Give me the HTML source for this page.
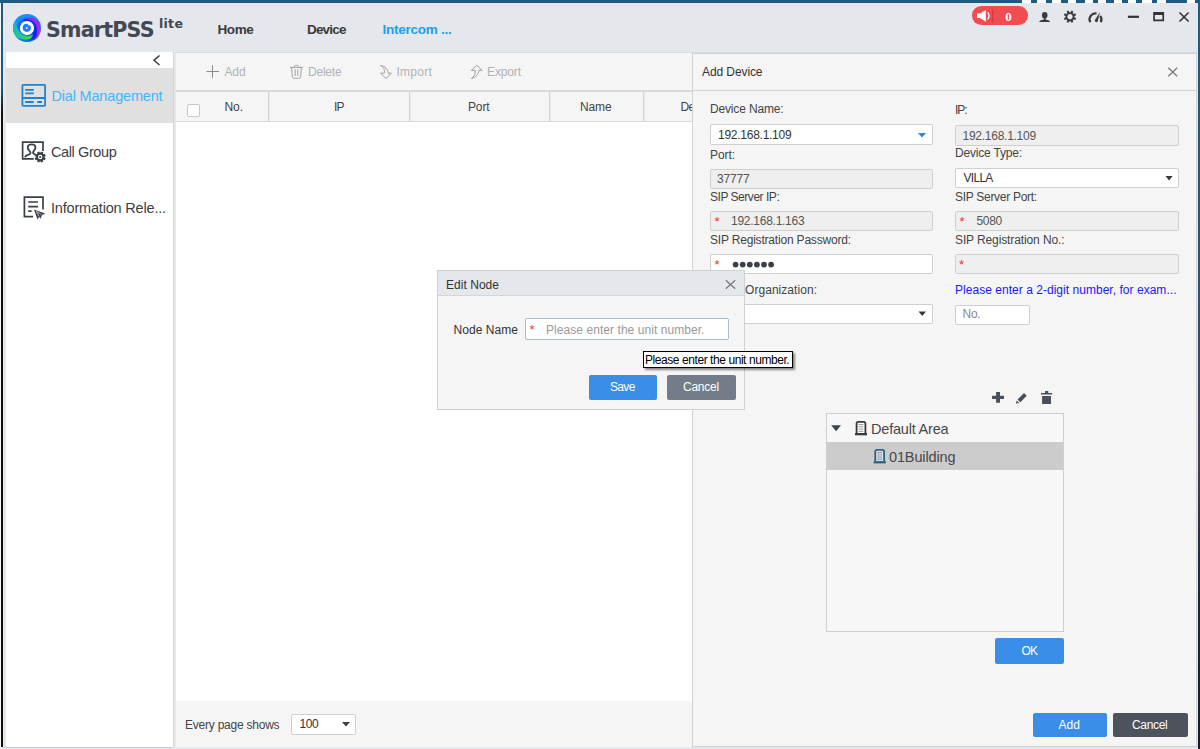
<!DOCTYPE html>
<html><head><meta charset="utf-8"><title>SmartPSS lite</title>
<style>
html,body{margin:0;padding:0;}
body{width:1200px;height:749px;position:relative;overflow:hidden;background:#e4e7ec;font-family:"Liberation Sans",sans-serif;}
.t{position:absolute;z-index:2;white-space:pre;line-height:normal;}
.a{position:absolute;box-sizing:border-box;}
svg{position:absolute;overflow:visible;}
.in{position:absolute;box-sizing:border-box;border:1px solid #cfcfcf;border-radius:2px;background:#fff;z-index:4;}
.dis{background:#efefef;}
.btn{position:absolute;border-radius:2px;z-index:4;}

</style></head>
<body>
<!-- desktop edges -->
<div class="a" style="left:0;top:0;width:1200px;height:3px;background:#1f5b80;"></div>
<div class="a" style="left:1022px;top:0;width:176px;height:3px;background:linear-gradient(90deg,#fff 0 9px,#1f5b80 9px 15px,#fff 15px 24px,#1f5b80 24px 30px,#fff 30px 39px,#1f5b80 39px 46px,#fff 46px 54px,#1f5b80 54px 63px,#fff 63px 71px,#1f5b80 71px 76px,#fff 76px 84px,#1f5b80 84px 92px,#fff 92px 100px,#1f5b80 100px 106px,#fff 106px 114px,#1f5b80 114px 120px,#fff 120px 130px,#1f5b80 130px 135px,#fff 135px 144px,#1f5b80 144px 165px,#fff 165px 173px,#1f5b80 173px 176px);"></div>
<div class="a" style="left:0;top:3px;width:2px;height:746px;background:#f6f6f6;"></div>
<div class="a" style="left:1.4px;top:3px;width:1.4px;height:744px;background:linear-gradient(180deg,#1f5b80 0,#1f5b80 85px,#111 110px,#111 100%);"></div>
<div class="a" style="left:1198px;top:0;width:2px;height:749px;background:linear-gradient(180deg,#1f5b80 0,#2a5578 30%,#3d4670 50%,#4a3a55 62%,#1d2a40 75%,#151c2c 100%);"></div>
<!-- header -->
<div class="a" style="left:3.5px;top:3px;width:1194.5px;height:49px;background:#e4e7ec;"></div>
<div class="a" style="left:3.5px;top:52px;width:1194.5px;height:1px;background:#d9dbe0;"></div>
<!-- sidebar -->
<div class="a" style="left:6px;top:52px;width:167px;height:695px;background:#fff;"></div>
<div class="a" style="left:6px;top:67.5px;width:167px;height:55.5px;background:#e0e0e0;"></div>
<div class="a" style="left:173px;top:52px;width:1px;height:695px;background:#d4d6da;"></div>
<div class="a" style="left:3px;top:746.5px;width:170px;height:1px;background:#cdcdcd;"></div>
<!-- content -->
<div class="a" style="left:176px;top:53px;width:517px;height:38px;background:#f5f5f5;"></div>
<div class="a" style="left:176px;top:90px;width:517px;height:2px;background:#d9d9d9;"></div>
<div class="a" style="left:176px;top:92px;width:517px;height:28.5px;background:#f5f5f5;"></div>
<div class="a" style="left:176px;top:120.5px;width:517px;height:1px;background:#d9d9d9;"></div>
<div class="a" style="left:176px;top:121.5px;width:517px;height:579.5px;background:#fff;"></div>
<div class="a" style="left:176px;top:701px;width:517px;height:45.5px;background:#f5f5f5;"></div>
<div class="a" style="left:268px;top:92px;width:1px;height:29px;background:#d2d2d2;"></div><div class="a" style="left:269px;top:92px;width:1px;height:29px;background:#ececec;"></div>
<div class="a" style="left:409px;top:92px;width:1px;height:29px;background:#d2d2d2;"></div><div class="a" style="left:410px;top:92px;width:1px;height:29px;background:#ececec;"></div>
<div class="a" style="left:549px;top:92px;width:1px;height:29px;background:#d2d2d2;"></div><div class="a" style="left:550px;top:92px;width:1px;height:29px;background:#ececec;"></div>
<div class="a" style="left:643px;top:92px;width:1px;height:29px;background:#d2d2d2;"></div><div class="a" style="left:644px;top:92px;width:1px;height:29px;background:#ececec;"></div>
<div class="a" style="left:187px;top:104px;width:13px;height:12.5px;background:#fff;border:1px solid #c8c8c8;border-radius:2px;"></div>
<div class="in" style="left:291px;top:713.5px;width:65px;height:21px;z-index:0"></div>
<svg style="left:342px;top:722px" width="8" height="5" viewBox="0 0 8 5"><path d="M0 0H8L4 4.6Z" fill="#3a3f45"/></svg>
<!-- panel -->
<div class="a" style="left:692px;top:53px;width:505px;height:694px;background:#f5f5f5;border:1px solid #d2d2d2;z-index:3;"></div>
<div class="a" style="left:693px;top:89.5px;width:503px;height:1px;background:#d2d2d2;z-index:4;"></div>
<!-- inputs -->
<div class="in" style="left:710px;top:124px;width:222.5px;height:21px"></div>
<div class="in dis" style="left:710px;top:168.5px;width:222.5px;height:20px"></div>
<div class="in dis" style="left:710px;top:210.5px;width:222.5px;height:20px"></div>
<div class="in" style="left:710px;top:253.5px;width:222.5px;height:20px"></div>
<div class="in" style="left:710px;top:303.5px;width:222.5px;height:20px"></div>
<div class="in dis" style="left:955px;top:125px;width:224px;height:20.5px"></div>
<div class="in" style="left:955px;top:167.5px;width:224px;height:20px"></div>
<div class="in dis" style="left:955px;top:210.5px;width:224px;height:20px"></div>
<div class="in dis" style="left:955px;top:253.5px;width:224px;height:20px"></div>
<div class="in" style="left:955px;top:304.5px;width:74.5px;height:20px"></div>
<!-- tree -->
<div class="a" style="left:826px;top:413px;width:238px;height:219px;background:#f7f7f7;border:1px solid #cfcfcf;z-index:4;"></div>
<div class="a" style="left:827px;top:442px;width:236px;height:28px;background:#cccccc;z-index:4;"></div>
<div class="btn" style="left:995px;top:638px;width:69px;height:25.5px;background:#3a8ee8;"></div>
<div class="btn" style="left:1032.5px;top:712.5px;width:74.5px;height:24px;background:#3a8ee8;"></div>
<div class="btn" style="left:1113px;top:712.5px;width:74.5px;height:24px;background:#4c535c;"></div>
<!-- dialog -->
<div class="a" style="left:437px;top:269.5px;width:308px;height:140px;background:#f5f5f5;border:1px solid #d0d0d0;z-index:10;"></div>
<div class="a" style="left:438px;top:270.5px;width:306px;height:25.5px;background:#e4e7ec;border-bottom:1px solid #d6d6d6;z-index:11;"></div>
<div class="in" style="left:524.5px;top:318px;width:204px;height:22px;border-color:#a9bccb;z-index:11"></div>
<div class="btn" style="left:588.5px;top:374.5px;width:68.5px;height:25.5px;background:#3a8ee8;z-index:11"></div>
<div class="btn" style="left:667px;top:374.5px;width:69px;height:25.5px;background:#737d89;z-index:11"></div>
<!-- tooltip -->
<div class="a" style="left:643px;top:351px;width:149.5px;height:17px;background:#fff;border:1px solid #000;box-shadow:2px 2px 2px rgba(0,0,0,.45);z-index:20;"></div>
<!-- logo -->
<svg style="left:13px;top:14px" width="28" height="28" viewBox="-14 -14 28 28">
<defs>
<linearGradient id="lb" x1="0" y1="0" x2="0.3" y2="1"><stop offset="0" stop-color="#1e93ff"/><stop offset="1" stop-color="#0878e6"/></linearGradient>
<linearGradient id="lg" x1="0" y1="0" x2="1" y2="1"><stop offset="0" stop-color="#12b0e4"/><stop offset="0.5" stop-color="#20c884"/><stop offset="1" stop-color="#48e428"/></linearGradient>
<linearGradient id="lp" x1="0" y1="0" x2="1" y2="1"><stop offset="0" stop-color="#7a30ff"/><stop offset="0.6" stop-color="#a024f8"/><stop offset="1" stop-color="#d62cff"/></linearGradient>
</defs>
<circle r="14" fill="url(#lb)"/>
<circle cx="-0.3" cy="0" r="9.9" fill="#1666ff"/>
<path d="M-3.5,-8.5C3,-12.5 12.5,-6 12.3,2C12,8 8,12 2,12.8C4.5,10.5 6,8.5 5.8,6.5L0,0Z" fill="#0b2cf0"/>
<path d="M-12.3,-6.6A14,14 0 0 0 -11.3,8C-9,10.3 -5.6,11.5 -0.3,11.4C3,11.2 5.2,9.2 5.9,6.4C3.5,8 1.5,8.3 -0.3,8.2C-3.5,8 -7.5,5 -9.4,0.3C-10.3,-2 -10.6,-4 -10.2,-6.5Z" fill="url(#lg)"/>
<path d="M-3.5,-8.5C-1,-10.2 2.4,-10.8 5,-10.4C8.5,-9.7 11.3,-7.2 12.6,-4C13.7,-1 13.9,1.4 13.4,3.5C12.8,7 10.5,10.5 7,12.4C9,10 9.8,8 10.1,5C10.5,1 9.5,-2.5 7.7,-5C5.5,-8 1,-9.3 -3.5,-8.5Z" fill="url(#lp)"/>
<circle cx="0" cy="0.1" r="7.1" fill="#fdfdff"/>
<circle cx="-0.2" cy="-0.2" r="4.1" fill="#1c7dff"/>
<circle cx="-0.2" cy="-0.1" r="0.9" fill="#fff"/>
<circle cx="2.4" cy="-3.8" r="1.3" fill="#fff"/>
</svg>
<!-- header right -->
<div class="a" style="left:971.8px;top:6.4px;width:56px;height:18.4px;border-radius:9.2px;background:#ef4d4f;"></div>
<svg style="left:0;top:0" width="1200" height="60" viewBox="0 0 1200 60">
<path d="M977,13.6H980L985.8,9.9V21.8L980,18.1H977Z" fill="#fff"/>
<path d="M987.6,12.4Q990.6,15.8 987.6,19.4" fill="none" stroke="#fff" stroke-width="1.3"/>
<rect x="991.9" y="9.3" width="1.3" height="12.8" fill="#d23a3d"/>
<!-- user -->
<ellipse cx="1044.7" cy="15.3" rx="2.8" ry="3.3" fill="#3c3c3c"/>
<path d="M1043.8,17.5H1045.6V19.4C1048.6,19.9 1050,20.7 1050.1,22.1H1039.2C1039.3,20.7 1040.8,19.9 1043.8,19.4Z" fill="#3c3c3c"/>
<!-- gear -->
<g transform="translate(1070,16.7) rotate(22.5)" fill="#3c3c3c">
<circle r="3.6" fill="none" stroke="#3c3c3c" stroke-width="1.9"/>
<g id="teeth"><rect x="-1.1" y="-6.2" width="2.2" height="2.4"/><rect x="-1.1" y="3.8" width="2.2" height="2.4"/><rect x="-6.2" y="-1.1" width="2.4" height="2.2"/><rect x="3.8" y="-1.1" width="2.4" height="2.2"/></g>
<g transform="rotate(45)"><rect x="-1.1" y="-6.2" width="2.2" height="2.4"/><rect x="-1.1" y="3.8" width="2.2" height="2.4"/><rect x="-6.2" y="-1.1" width="2.4" height="2.2"/><rect x="3.8" y="-1.1" width="2.4" height="2.2"/></g>
</g>
<!-- gauge -->
<path d="M1090.3,22.2 A5.9,5.9 0 0 1 1096.6,13.5" fill="none" stroke="#3c3c3c" stroke-width="2.2"/>
<path d="M1100.2,16 A5.9,5.9 0 0 1 1100.8,22.2" fill="none" stroke="#3c3c3c" stroke-width="2.2"/>
<path d="M1100,12L1097.8,21.3A1.6,1.6 0 0 1 1094.9,20Z" fill="#3c3c3c"/>
<!-- window controls -->
<rect x="1127.9" y="15.7" width="11.1" height="2.2" fill="#333"/>
<path d="M1153.2,12.1H1164.1V21.2H1153.2ZM1154.9,15V19.6H1162.4V15Z" fill="#333" fill-rule="evenodd"/>
<path d="M1179.5,12.5L1188.6,21.5M1188.6,12.5L1179.5,21.5" stroke="#333" stroke-width="1.6" fill="none"/>
</svg>
<!-- sidebar icons -->
<svg style="left:0;top:50px" width="180" height="180" viewBox="0 50 180 180">
<path d="M159.5,55.5L154,60.3L159.5,65" fill="none" stroke="#444" stroke-width="1.6"/>
<g fill="none" stroke="#1a84d8" stroke-width="1.8">
<rect x="22.4" y="84.9" width="22.7" height="20.9" rx="0.8"/>
<path d="M22.4,98H45.1M25.2,89.8H33.8M25.2,93.4H33.8M25.2,102H33.8M37.2,102H42"/>
</g>
<g fill="none" stroke="#3a404a" stroke-width="1.7">
<path d="M43,151V142.1H22.6V158.9H33.8"/>
<path d="M25,157.2C25.5,155 29,155 30.2,153.6C31,152.6 30.2,151.6 29.2,150.6C26.6,147.8 27.4,144.3 31.6,144.3C35.8,144.3 36.6,147.8 34,150.6C33,151.6 32.6,152.6 33.6,153.6L35.2,154.6" stroke-width="1.8"/>
</g>
<g transform="translate(40.2,157)" fill="#3a404a">
<circle r="3.3" fill="none" stroke="#3a404a" stroke-width="2.2"/>
<circle r="1.1"/>
<g transform="rotate(22.5)">
<rect x="-1.2" y="-5.5" width="2.4" height="2"/><rect x="-1.2" y="3.5" width="2.4" height="2"/><rect x="-5.5" y="-1.2" width="2" height="2.4"/><rect x="3.5" y="-1.2" width="2" height="2.4"/>
<g transform="rotate(45)"><rect x="-1.2" y="-5.5" width="2.4" height="2"/><rect x="-1.2" y="3.5" width="2.4" height="2"/><rect x="-5.5" y="-1.2" width="2" height="2.4"/><rect x="3.5" y="-1.2" width="2" height="2.4"/></g>
</g>
</g>
<g fill="none" stroke="#3a404a" stroke-width="1.7">
<path d="M43,209.6V197.2H24.4V216.7H33"/>
<path d="M28.2,202H38M28.2,206.6H38M28.2,211.2H31.6"/>
</g>
<path d="M34,209.4L45.2,213.6L41.8,215.2L40.7,218.7L39.1,217.1L37.5,219.5Z" fill="#3a404a"/><path d="M36.3,211.3L41.3,214.4M36.3,211.3L39,216.5" stroke="#fff" stroke-width="0.6" fill="none"/>
</svg>
<!-- toolbar icons -->
<svg style="left:200px;top:60px" width="330" height="24" viewBox="200 60 330 24">
<path d="M206.5,71.5H219M212.5,65.3V77.8" stroke="#8a8a8a" stroke-width="1" fill="none"/>
<g fill="none" stroke="#a2a2a2" stroke-width="1">
<path d="M290,67.4H303M294,67.4C294,64.6 299,64.6 299,67.4M291.6,67.4L292.3,76.5Q292.5,78.3 294.3,78.3H298.7Q300.5,78.3 300.7,76.5L301.4,67.4M295.2,69.3V76M297.8,69.3V76"/>
<path d="M380.5,65.5C384,67 385,70 384.2,73.2H380.5L386,78.5L391.5,73.2H388C388,69 385,66 380.5,65.5Z"/>
<path d="M476.75,65.3L482.2,70.4H479C478.5,74.5 476,77.5 471.3,78.5C474.5,76.5 475.7,74 475.3,70.4H471.3Z"/>
</g>
</svg>
<!-- panel icons -->
<svg style="left:690px;top:50px;z-index:6" width="510" height="440" viewBox="690 50 510 440">
<path d="M1168.3,67.8L1177.2,76.3M1177.2,67.8L1168.3,76.3" stroke="#777" stroke-width="1.2" fill="none"/>
<path d="M918,133H926L922,137.6Z" fill="#2b86e0"/>
<path d="M1165.5,176H1172.7L1169.1,180.6Z" fill="#33383f"/>
<path d="M918.5,311.5H926L922.25,316.1Z" fill="#33383f"/>
<g fill="#49505a">
<path d="M996.1,391.9H1000V395.7H1004V399H1000V402.8H996.1V399H992.1V395.7H996.1Z"/>
<path d="M1024,393L1026.8,395.8L1020.3,402.3L1017.5,399.5ZM1016.7,400.4L1019.4,403.1L1015.9,403.6Z"/>
<path d="M1041,393H1045V391H1048.3V393H1052.1V394.6H1041ZM1042.1,396H1051V403.9H1042.1Z"/>
<path d="M831.2,425.2H841L836.1,431.3Z" fill="#3c4450"/>
</g>
<g>
<path d="M856.6,433V423.5Q856.6,421.8 858.3,421.8H863.7Q865.4,421.8 865.4,423.5V433" fill="#fff" stroke="#3a3a3a" stroke-width="1.8"/>
<rect x="855" y="433" width="12" height="2.3" fill="#3a3a3a"/>
<path d="M858.6,424.5H863.4M858.6,426.8H863.4M858.6,429.1H863.4M858.6,431.3H863.4" stroke="#8c8c8c" stroke-width="0.9"/>
<path d="M875.3,461.1V451.5Q875.3,449.8 877,449.8H882.4Q884.1,449.8 884.1,451.5V461.1" fill="#dfe3e8" stroke="#2f5f8a" stroke-width="1.8"/>
<rect x="873.7" y="461.1" width="12.1" height="2.3" fill="#2f5f8a"/>
<path d="M877.3,452.5H882.1M877.3,454.8H882.1M877.3,457.1H882.1M877.3,459.3H882.1" stroke="#6c8fb0" stroke-width="0.9"/>
</g>
</svg>
<!-- dialog X -->
<svg style="left:720px;top:275px;z-index:13" width="20" height="20" viewBox="720 275 20 20">
<path d="M725.8,280.3L735.2,288.8M735.2,280.3L725.8,288.8" stroke="#777" stroke-width="1.2" fill="none"/>
</svg>
<!-- password dots -->
<svg style="left:730px;top:260px;z-index:6" width="50" height="10" viewBox="730 260 50 10">
<g fill="#3c4148"><circle cx="735.6" cy="264.6" r="2.9"/><circle cx="742.7" cy="264.6" r="2.9"/><circle cx="749.8" cy="264.6" r="2.9"/><circle cx="756.9" cy="264.6" r="2.9"/><circle cx="764" cy="264.6" r="2.9"/><circle cx="771.1" cy="264.6" r="2.9"/></g>
</svg>

<span class="t" style="left:46.0px;top:18.0px;font-size:20.6px;color:#434852;font-weight:700;font-family:'DejaVu Sans',sans-serif;letter-spacing:-0.791px;">SmartPSS</span>
<span class="t" style="left:159.0px;top:16.0px;font-size:12.5px;color:#434852;font-weight:700;font-family:'DejaVu Sans',sans-serif;letter-spacing:0.277px;">lite</span>
<span class="t" style="left:217.5px;top:22.0px;font-size:13.5px;color:#3b3b3b;font-weight:700;letter-spacing:-0.433px;">Home</span>
<span class="t" style="left:307.0px;top:22.0px;font-size:13.5px;color:#3b3b3b;font-weight:700;letter-spacing:-0.827px;">Device</span>
<span class="t" style="left:382.5px;top:22.0px;font-size:13.5px;color:#1b9fee;font-weight:700;letter-spacing:-0.262px;">Intercom ...</span>
<span class="t" style="left:1005.2px;top:9.0px;font-size:13px;color:#fff;font-weight:700;font-family:'Liberation Serif',sans-serif;">0</span>
<span class="t" style="left:51.5px;top:88.0px;font-size:14.5px;color:#3fb6fb;letter-spacing:-0.183px;">Dial Management</span>
<span class="t" style="left:51.0px;top:144.0px;font-size:14.5px;color:#3a3f45;letter-spacing:-0.401px;">Call Group</span>
<span class="t" style="left:51.0px;top:200.0px;font-size:14.5px;color:#3a3f45;letter-spacing:-0.188px;">Information Rele...</span>
<span class="t" style="left:224.5px;top:65.0px;font-size:12px;color:#aeb2b8;letter-spacing:-0.144px;">Add</span>
<span class="t" style="left:308.0px;top:65.0px;font-size:12px;color:#aeb2b8;letter-spacing:-0.216px;">Delete</span>
<span class="t" style="left:396.5px;top:65.0px;font-size:12px;color:#aeb2b8;letter-spacing:0.270px;">Import</span>
<span class="t" style="left:487.0px;top:65.0px;font-size:12px;color:#aeb2b8;letter-spacing:-0.125px;">Export</span>
<span class="t" style="left:224.5px;top:100.0px;font-size:12px;color:#444;letter-spacing:-0.075px;">No.</span>
<span class="t" style="left:334.0px;top:100.0px;font-size:12px;color:#444;letter-spacing:-0.896px;">IP</span>
<span class="t" style="left:468.0px;top:100.0px;font-size:12px;color:#444;letter-spacing:-0.147px;">Port</span>
<span class="t" style="left:580.0px;top:100.0px;font-size:12px;color:#444;letter-spacing:-0.147px;">Name</span>
<span class="t" style="left:680.5px;top:100.0px;font-size:12px;color:#444;letter-spacing:-0.649px;">Device Type</span>
<span class="t" style="left:185.0px;top:718.0px;font-size:12px;color:#444;letter-spacing:-0.230px;">Every page shows</span>
<span class="t" style="left:299.5px;top:717.0px;font-size:12px;color:#333;letter-spacing:-0.412px;">100</span>
<span class="t" style="left:702.0px;top:65.0px;font-size:12px;color:#333;letter-spacing:-0.092px;z-index:5;">Add Device</span>
<span class="t" style="left:710.0px;top:102.0px;font-size:12px;color:#444;letter-spacing:-0.162px;z-index:5;">Device Name:</span>
<span class="t" style="left:718.0px;top:128.0px;font-size:12px;color:#333;letter-spacing:-0.260px;z-index:5;">192.168.1.109</span>
<span class="t" style="left:710.0px;top:148.0px;font-size:12px;color:#444;letter-spacing:-0.076px;z-index:5;">Port:</span>
<span class="t" style="left:717.0px;top:172.0px;font-size:12px;color:#555;letter-spacing:-0.194px;z-index:5;">37777</span>
<span class="t" style="left:710.0px;top:190.0px;font-size:12px;color:#444;letter-spacing:-0.468px;z-index:5;">SIP Server IP:</span>
<span class="t" style="left:731.0px;top:214.0px;font-size:12px;color:#555;letter-spacing:-0.260px;z-index:5;">192.168.1.163</span>
<span class="t" style="left:710.0px;top:233.0px;font-size:12px;color:#444;letter-spacing:-0.191px;z-index:5;">SIP Registration Password:</span>
<span class="t" style="left:710.0px;top:283.0px;font-size:12px;color:#444;letter-spacing:-0.429px;z-index:5;">Select</span>
<span class="t" style="left:745.0px;top:283.0px;font-size:12px;color:#444;letter-spacing:0.050px;z-index:5;">Organization:</span>
<span class="t" style="left:955.0px;top:103.0px;font-size:12px;color:#444;letter-spacing:-1.069px;z-index:5;">IP:</span>
<span class="t" style="left:962.5px;top:129.0px;font-size:12px;color:#555;letter-spacing:-0.260px;z-index:5;">192.168.1.109</span>
<span class="t" style="left:955.0px;top:146.0px;font-size:12px;color:#444;letter-spacing:-0.188px;z-index:5;">Device Type:</span>
<span class="t" style="left:963.5px;top:171.0px;font-size:12px;color:#333;letter-spacing:-0.712px;z-index:5;">VILLA</span>
<span class="t" style="left:955.0px;top:190.0px;font-size:12px;color:#444;letter-spacing:-0.289px;z-index:5;">SIP Server Port:</span>
<span class="t" style="left:976.5px;top:214.0px;font-size:12px;color:#555;letter-spacing:-0.344px;z-index:5;">5080</span>
<span class="t" style="left:955.0px;top:233.0px;font-size:12px;color:#444;letter-spacing:-0.114px;z-index:5;">SIP Registration No.:</span>
<span class="t" style="left:955.0px;top:283.0px;font-size:12px;color:#1c18ff;letter-spacing:0.033px;z-index:5;">Please enter a 2-digit number, for exam...</span>
<span class="t" style="left:962.5px;top:307.0px;font-size:12px;color:#8a8a8a;letter-spacing:-0.275px;z-index:5;">No.</span>
<span class="t" style="left:871.0px;top:421.0px;font-size:14.5px;color:#484848;letter-spacing:-0.201px;z-index:5;">Default Area</span>
<span class="t" style="left:889.0px;top:449.0px;font-size:14.5px;color:#484848;letter-spacing:-0.130px;z-index:5;">01Building</span>
<span class="t" style="left:1021.5px;top:644.0px;font-size:12px;color:#fff;letter-spacing:-0.896px;z-index:5;">OK</span>
<span class="t" style="left:1058.5px;top:718.0px;font-size:12px;color:#fff;letter-spacing:0.056px;z-index:5;">Add</span>
<span class="t" style="left:1132.0px;top:718.0px;font-size:12px;color:#fff;letter-spacing:-0.338px;z-index:5;">Cancel</span>
<span class="t" style="left:714.5px;top:214.0px;font-size:13px;color:#f03030;z-index:5;">*</span>
<span class="t" style="left:714.5px;top:257.0px;font-size:13px;color:#f03030;z-index:5;">*</span>
<span class="t" style="left:959.5px;top:214.0px;font-size:13px;color:#f03030;z-index:5;">*</span>
<span class="t" style="left:959.0px;top:257.0px;font-size:13px;color:#f03030;z-index:5;">*</span>
<span class="t" style="left:446.0px;top:278.0px;font-size:12px;color:#333;letter-spacing:0.035px;z-index:12;">Edit Node</span>
<span class="t" style="left:453.5px;top:323.0px;font-size:12px;color:#333;letter-spacing:0.055px;z-index:12;">Node Name</span>
<span class="t" style="left:529.5px;top:322.0px;font-size:13px;color:#f03030;z-index:12;">*</span>
<span class="t" style="left:546.0px;top:323.0px;font-size:12px;color:#999;letter-spacing:0.060px;z-index:12;">Please enter the unit number.</span>
<span class="t" style="left:610.0px;top:380.0px;font-size:12px;color:#fff;letter-spacing:-0.674px;z-index:12;">Save</span>
<span class="t" style="left:683.0px;top:380.0px;font-size:12px;color:#fff;letter-spacing:-0.247px;z-index:12;">Cancel</span>
<span class="t" style="left:645.0px;top:353.0px;font-size:12px;color:#000;letter-spacing:-0.431px;z-index:22;">Please enter the unit number.</span>
</body></html>
